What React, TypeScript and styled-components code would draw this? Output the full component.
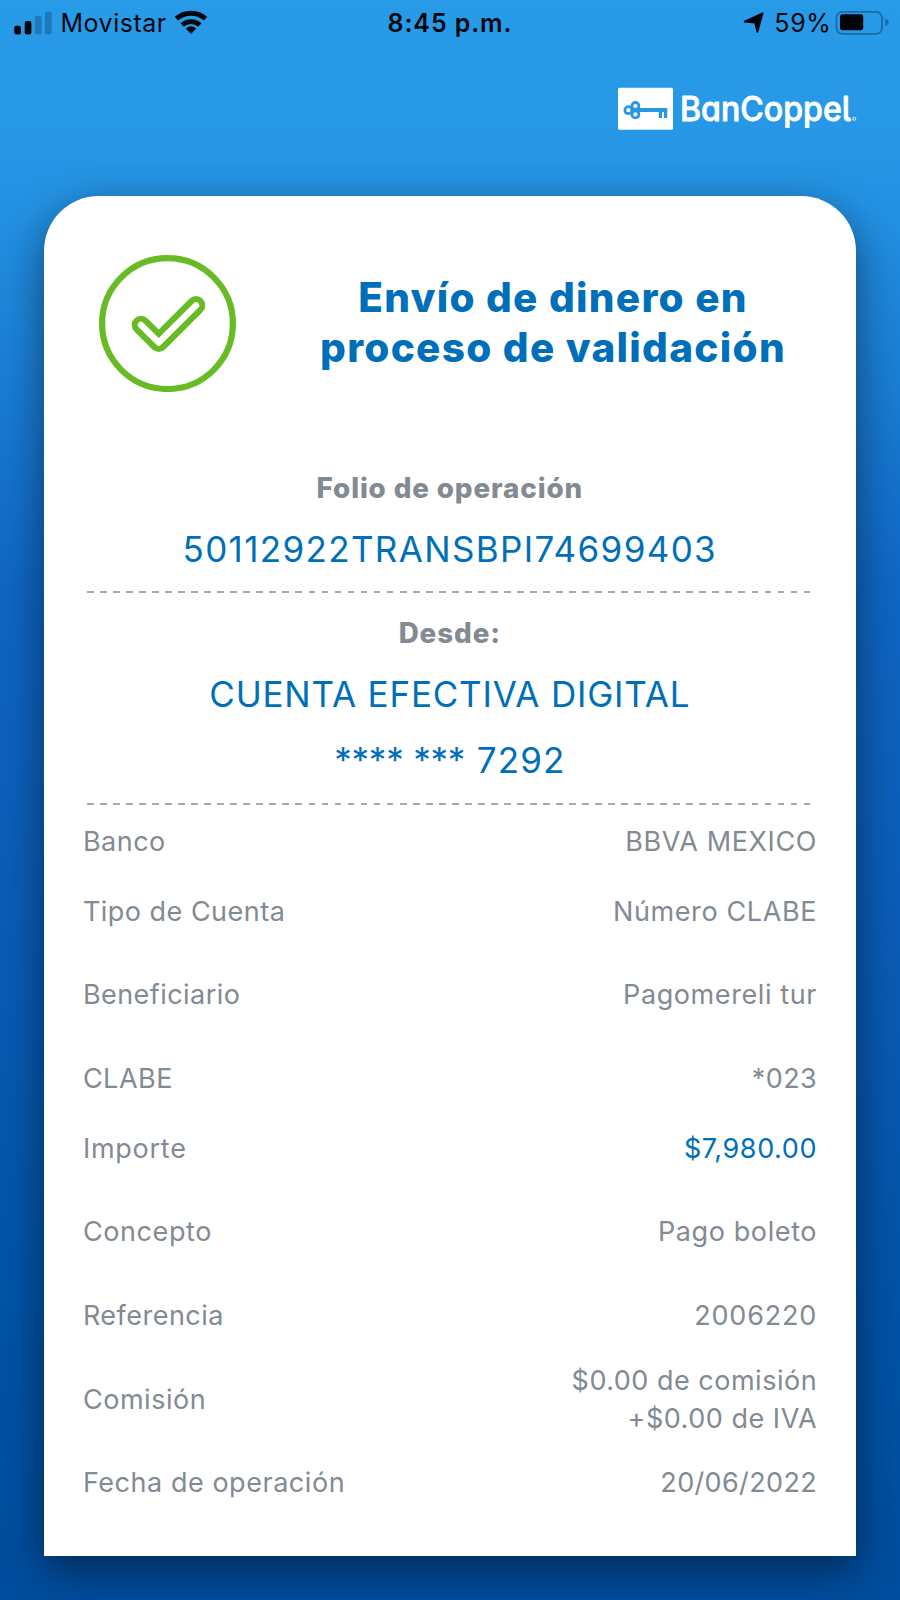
import React from "react";
import styled, { createGlobalStyle } from "styled-components";

const blue = "#006fb9";
const gray = "#828a93";

const GlobalStyle = createGlobalStyle`
  * { box-sizing: border-box; }
  body {
    margin: 0;
    font-family: Inter, "Liberation Sans", sans-serif;
    -webkit-font-smoothing: antialiased;
  }
`;

const Screen = styled.div`
  width: 900px;
  height: 1600px;
  overflow: hidden;
  display: flex;
  flex-direction: column;
  background: linear-gradient(
    180deg,
    #289be8 0%,
    #2798e6 8%,
    #2391e3 13%,
    #0f66c4 37%,
    #0a5cb7 58%,
    #0052a5 85%,
    #004d9e 100%
  );
`;

const StatusBar = styled.header`
  height: 46px;
  flex: none;
  display: grid;
  grid-template-columns: 1fr auto 1fr;
  align-items: center;
  padding: 0 10px 0 10px;
  font-size: 25px;
  line-height: 30px;
  color: #00060c;
`;

const StatusGroup = styled.div<{ $end?: boolean }>`
  display: flex;
  align-items: center;
  padding-left: ${(p) => (p.$end ? 0 : 4)}px;
  justify-content: ${(p) => (p.$end ? "flex-end" : "flex-start")};
`;

const StatusText = styled.span<{ $spacing: number; $bold?: boolean }>`
  letter-spacing: ${(p) => p.$spacing}px;
  font-weight: ${(p) => (p.$bold ? 600 : 400)};
`;

const Carrier = styled(StatusText)`
  margin: 0 7.5px 0 8.5px;
`;

const Battery = styled(StatusText)`
  margin: 0 3.5px 0 10px;
`;

const Brand = styled.div`
  flex: none;
  height: 150px;
  display: flex;
  justify-content: flex-end;
  align-items: flex-start;
  padding: 41px 42px 0 0;
`;

const Card = styled.main`
  flex: none;
  width: 812.6px;
  height: 1360.5px;
  margin: -0.5px 0 0 43.5px;
  padding: 59.4px 39px 0 39px;
  background: #fff;
  border-radius: 55px 55px 0 0;
  box-shadow: 0 14px 44px rgba(0, 0, 0, 0.49);
`;

const Heading = styled.div`
  display: flex;
  align-items: flex-start;
  height: 208.8px;
  padding-left: 16.5px;
`;

const Title = styled.h1`
  width: 480px;
  margin: 18.6px 0 0 77px;
  font-size: 40.5px;
  line-height: 49.3px;
  font-weight: 800;
  letter-spacing: 1.3px;
  text-align: center;
  white-space: nowrap;
  color: ${blue};
`;

const Section = styled.section<{ $height: number; $top?: number }>`
  height: ${(p) => p.$height}px;
  padding-top: ${(p) => p.$top ?? 0}px;
  text-align: center;
  white-space: nowrap;
`;

const SectionLabel = styled.h2<{ $spacing: number }>`
  margin: 0;
  font-size: 27.8px;
  line-height: 48px;
  font-weight: 800;
  letter-spacing: ${(p) => p.$spacing}px;
  color: ${gray};
`;

const SectionValue = styled.p<{ $spacing: number; $line: number }>`
  margin: 0;
  font-size: 35px;
  line-height: ${(p) => p.$line}px;
  letter-spacing: ${(p) => p.$spacing}px;
  color: ${blue};
`;

const Digits = styled.span`
  margin-left: 2px;
  letter-spacing: 1.1px;
`;

const Dashes = styled.div`
  height: 2px;
  margin: 0 6px 0 4.5px;
  background: repeating-linear-gradient(90deg, #a9a9a9 0 6.8px, transparent 6.8px 13.03px);
`;

const Details = styled.dl`
  margin: 0;
  padding-top: 1.8px;
`;

const Row = styled.div<{ $height: number }>`
  height: ${(p) => p.$height}px;
  display: flex;
  justify-content: space-between;
  align-items: center;
  padding-left: 0.4px;
  font-size: 27px;
  line-height: 37.4px;
  color: ${gray};
  white-space: nowrap;
`;

const Label = styled.dt<{ $spacing: number }>`
  letter-spacing: ${(p) => p.$spacing}px;
`;

const Value = styled.dd<{ $accent?: boolean }>`
  margin: 0;
  text-align: right;
  color: ${(p) => (p.$accent ? blue : "inherit")};
`;

const ValueLine = styled.div<{ $spacing: number }>`
  letter-spacing: ${(p) => p.$spacing}px;
`;

const SignalIcon = () => (
  <svg width="38" height="24" viewBox="0 0 38 24">
    <rect x="0.3" y="14.7" width="6.7" height="8.7" rx="2" fill="#00060c" />
    <rect x="10.7" y="10" width="6.7" height="13.4" rx="2" fill="#00060c" />
    <rect x="21" y="5" width="6.5" height="18.4" rx="2" fill="#1f79b8" />
    <rect x="31" y="0.5" width="6.7" height="22.9" rx="2" fill="#1f79b8" />
  </svg>
);

const WifiIcon = () => (
  <svg width="34" height="28" viewBox="0 0 34 28" fill="none" stroke="#00060c">
    <path d="M2.4 9.7A22 22 0 0 1 31.6 9.7" strokeWidth="5" />
    <path d="M8.1 16.1A13.2 13.2 0 0 1 25.9 16.1" strokeWidth="4.8" />
    <path d="M17 24.6L12 19.6Q17 15.6 22 19.6Z" fill="#00060c" strokeWidth="0.5" strokeLinejoin="round" />
  </svg>
);

const LocationIcon = () => (
  <svg width="21" height="22" viewBox="0 0 21 22">
    <path
      d="M19.6 1.2L1.6 9.5L12 10.6L14.4 19.8Z"
      fill="#00060c"
      stroke="#00060c"
      strokeWidth="1.8"
      strokeLinejoin="round"
    />
  </svg>
);

const BatteryIcon = () => (
  <svg width="55" height="24" viewBox="0 0 55 24">
    <rect x="1.4" y="0.8" width="45.6" height="22" rx="6" fill="none" stroke="#1b6ba5" strokeWidth="1.8" />
    <rect x="5" y="3.2" width="23.2" height="16" rx="2.6" fill="#00060c" />
    <path d="M50.2 7.4Q53.6 8.5 53.6 11.2T50.2 15Z" fill="#1b6ba5" />
  </svg>
);

const LogoText = styled.text`
  font-family: Inter, sans-serif;
  font-size: 33.4px;
  font-weight: 500;
  font-feature-settings: "cv11", "cv05";
  fill: #fff;
  stroke: #fff;
  stroke-width: 0.8px;
  stroke-linejoin: round;
`;

const Logo = () => (
  <svg width="240" height="48" viewBox="0 0 240 48">
    <rect x="0" y="0.7" width="55" height="42" rx="1.5" fill="#fff" />
    <g fill="none" stroke="#2898e4" strokeWidth="2.8">
      <circle cx="10.4" cy="23.2" r="3.5" />
      <circle cx="17.4" cy="19" r="3.5" />
      <circle cx="17.4" cy="27.4" r="3.5" />
      <path d="M20 23H49.3" strokeWidth="4" />
      <path d="M42.4 24V31M47.6 24V31" strokeWidth="3.2" />
    </g>
    <LogoText x="62" y="33.8" textLength="171" lengthAdjust="spacingAndGlyphs">
      BanCoppel
    </LogoText>
    <circle cx="236.3" cy="31.8" r="1.5" fill="none" stroke="#fff" strokeWidth="0.9" />
  </svg>
);

const CheckIcon = () => (
  <svg width="137" height="137" viewBox="0 0 137 137" fill="none" strokeLinecap="round" strokeLinejoin="round">
    <circle cx="68.5" cy="68.6" r="65.4" stroke="#69bb26" strokeWidth="6.2" />
    <path d="M42 70L59.7 87.6L97 50.4" stroke="#69bb26" strokeWidth="18.6" />
    <path d="M42 70L59.7 87.6L97 50.4" stroke="#fff" strokeWidth="6.4" />
  </svg>
);

type Detail = {
  label: string;
  spacing: number;
  height: number;
  lines: [string, number][];
  accent?: boolean;
};

const details: Detail[] = [
  { label: "Banco", spacing: 0.5, height: 70, lines: [["BBVA MEXICO", 0.62]] },
  { label: "Tipo de Cuenta", spacing: 0.48, height: 70, lines: [["Número CLABE", 0.62]] },
  { label: "Beneficiario", spacing: 0.45, height: 96, lines: [["Pagomereli tur", 0.6]] },
  { label: "CLABE", spacing: 0.5, height: 71.6, lines: [["*023", 0.4]] },
  { label: "Importe", spacing: 0.75, height: 69.4, lines: [["$7,980.00", 0.6]], accent: true },
  { label: "Concepto", spacing: 0.6, height: 96, lines: [["Pago boleto", 0.6]] },
  { label: "Referencia", spacing: 0.48, height: 72, lines: [["2006220", 0.8]] },
  {
    label: "Comisión",
    spacing: 0.55,
    height: 96,
    lines: [
      ["$0.00 de comisión", 0.5],
      ["+$0.00 de IVA", 0.52],
    ],
  },
  { label: "Fecha de operación", spacing: 0.54, height: 70.6, lines: [["20/06/2022", 0.36]] },
];

export default function App() {
  return (
    <>
      <GlobalStyle />
      <Screen>
        <StatusBar>
          <StatusGroup>
            <SignalIcon />
            <Carrier $spacing={0.5}>Movistar</Carrier>
            <WifiIcon />
          </StatusGroup>
          <StatusText $spacing={0.9} $bold>
            8:45 p.m.
          </StatusText>
          <StatusGroup $end>
            <LocationIcon />
            <Battery $spacing={0.65}>59%</Battery>
            <BatteryIcon />
          </StatusGroup>
        </StatusBar>
        <Brand>
          <Logo />
        </Brand>
        <Card>
          <Heading>
            <CheckIcon />
            <Title>
              Envío de dinero en
              <br />
              proceso de validación
            </Title>
          </Heading>
          <Section $height={127.3}>
            <SectionLabel $spacing={0.87}>Folio de operación</SectionLabel>
            <SectionValue $spacing={1.35} $line={74}>
              50112922TRANSBPI74699403
            </SectionValue>
          </Section>
          <Dashes />
          <Section $height={210} $top={16.5}>
            <SectionLabel $spacing={0.9}>Desde:</SectionLabel>
            <SectionValue $spacing={0.81} $line={75}>
              CUENTA EFECTIVA DIGITAL
            </SectionValue>
            <SectionValue $spacing={-0.2} $line={57}>
              **** *** <Digits>7292</Digits>
            </SectionValue>
          </Section>
          <Dashes />
          <Details>
            {details.map((d) => (
              <Row key={d.label} $height={d.height}>
                <Label $spacing={d.spacing}>{d.label}</Label>
                <Value $accent={d.accent}>
                  {d.lines.map(([text, spacing]) => (
                    <ValueLine key={text} $spacing={spacing}>
                      {text}
                    </ValueLine>
                  ))}
                </Value>
              </Row>
            ))}
          </Details>
        </Card>
      </Screen>
    </>
  );
}
